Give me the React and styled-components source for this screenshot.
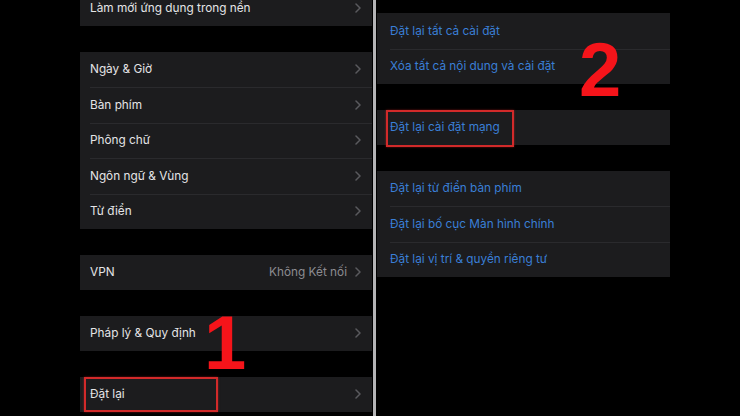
import React from 'react';
import styled, { createGlobalStyle } from 'styled-components';

const GlobalStyle = createGlobalStyle`
  html, body {
    margin: 0;
    padding: 0;
    background: #000;
  }
  body {
    font-family: Inter, "Noto Sans", "Liberation Sans", sans-serif;
  }
`;

const leftGroups = [
  [{ label: 'Làm mới ứng dụng trong nền' }],
  [
    { label: 'Ngày & Giờ' },
    { label: 'Bàn phím' },
    { label: 'Phông chữ' },
    { label: 'Ngôn ngữ & Vùng' },
    { label: 'Từ điển' },
  ],
  [{ label: 'VPN', detail: 'Không Kết nối' }],
  [{ label: 'Pháp lý & Quy định' }],
  [{ label: 'Đặt lại', highlight: { left: 4, width: 134, height: 35 } }],
];

const rightGroups = [
  [{ label: 'Đặt lại tất cả cài đặt' }, { label: 'Xóa tất cả nội dung và cài đặt' }],
  [{ label: 'Đặt lại cài đặt mạng', highlight: { left: 9, width: 128, height: 37 } }],
  [
    { label: 'Đặt lại từ điển bàn phím' },
    { label: 'Đặt lại bố cục Màn hình chính' },
    { label: 'Đặt lại vị trí & quyền riêng tư' },
  ],
];

function Chevron() {
  return (
    <ChevronIcon width="6" height="10" viewBox="0 0 6 10">
      <path d="M1 1l4 4-4 4" fill="none" stroke="#5a5a5e" strokeWidth="1.5" strokeLinecap="round" strokeLinejoin="round" />
    </ChevronIcon>
  );
}

function SettingsList({ groups, action }) {
  return groups.map((rows, gi) => (
    <Group key={gi}>
      {rows.map((row) => (
        <Row key={row.label} $inset={action ? 13 : 10}>
          <Label $action={action}>{row.label}</Label>
          {!action && (
            <Trailing>
              {row.detail && <Detail>{row.detail}</Detail>}
              <Chevron />
            </Trailing>
          )}
          {row.highlight && (
            <Highlight
              style={{
                left: row.highlight.left,
                width: row.highlight.width,
                height: row.highlight.height,
              }}
            />
          )}
        </Row>
      ))}
    </Group>
  ));
}

export default function App() {
  return (
    <>
      <GlobalStyle />
      <Page>
        <LeftPanel>
          <SettingsList groups={leftGroups} />
        </LeftPanel>
        <Divider />
        <RightPanel>
          <SettingsList groups={rightGroups} action />
        </RightPanel>
        <StepNumber $left={204} $top={305}>1</StepNumber>
        <StepNumber $left={579} $top={32}>2</StepNumber>
      </Page>
    </>
  );
}

const Page = styled.div`
  position: relative;
  display: flex;
  align-items: flex-start;
  width: 740px;
  height: 416px;
  padding-left: 80px;
  box-sizing: border-box;
  background: #000;
  overflow: hidden;
`;

const LeftPanel = styled.div`
  width: 292px;
  margin-top: -9.5px;
  display: flex;
  flex-direction: column;
  gap: 25.5px;
`;

const RightPanel = styled.div`
  width: 293px;
  padding-top: 13px;
  display: flex;
  flex-direction: column;
  gap: 25.5px;
`;

const Divider = styled.div`
  width: 3px;
  height: 416px;
  margin: 0 1px;
  background: #b4b4b6;
  flex-shrink: 0;
`;

const Group = styled.div`
  background: #1c1c1e;
  display: flex;
  flex-direction: column;
`;

const Row = styled.div`
  position: relative;
  height: 35.5px;
  display: flex;
  align-items: center;
  justify-content: space-between;
  padding: 0 11px 0 ${(p) => p.$inset}px;
  box-sizing: border-box;

  & + &::before {
    content: '';
    position: absolute;
    top: 0;
    left: ${(p) => p.$inset}px;
    right: 0;
    height: 1px;
    background: #2a2a2d;
  }
`;

const Label = styled.span`
  font-size: 11.8px;
  color: ${(p) => (p.$action ? '#3a7fd6' : '#e4e4e6')};
  white-space: nowrap;
`;

const Trailing = styled.div`
  display: flex;
  align-items: center;
  gap: 8px;
`;

const Detail = styled.span`
  font-size: 11.8px;
  color: #8c8c91;
`;

const ChevronIcon = styled.svg`
  display: block;
`;

const Highlight = styled.div`
  position: absolute;
  top: 0.5px;
  border: 2px solid #d22a2a;
  box-sizing: border-box;
  box-shadow: 0 0 2px rgba(230, 40, 40, 0.5);
  pointer-events: none;
`;

const StepNumber = styled.span`
  position: absolute;
  left: ${(p) => p.$left}px;
  top: ${(p) => p.$top}px;
  font-family: "Liberation Sans", Arial, sans-serif;
  font-weight: 700;
  font-size: 76px;
  line-height: 1;
  color: #f5141a;
`;
